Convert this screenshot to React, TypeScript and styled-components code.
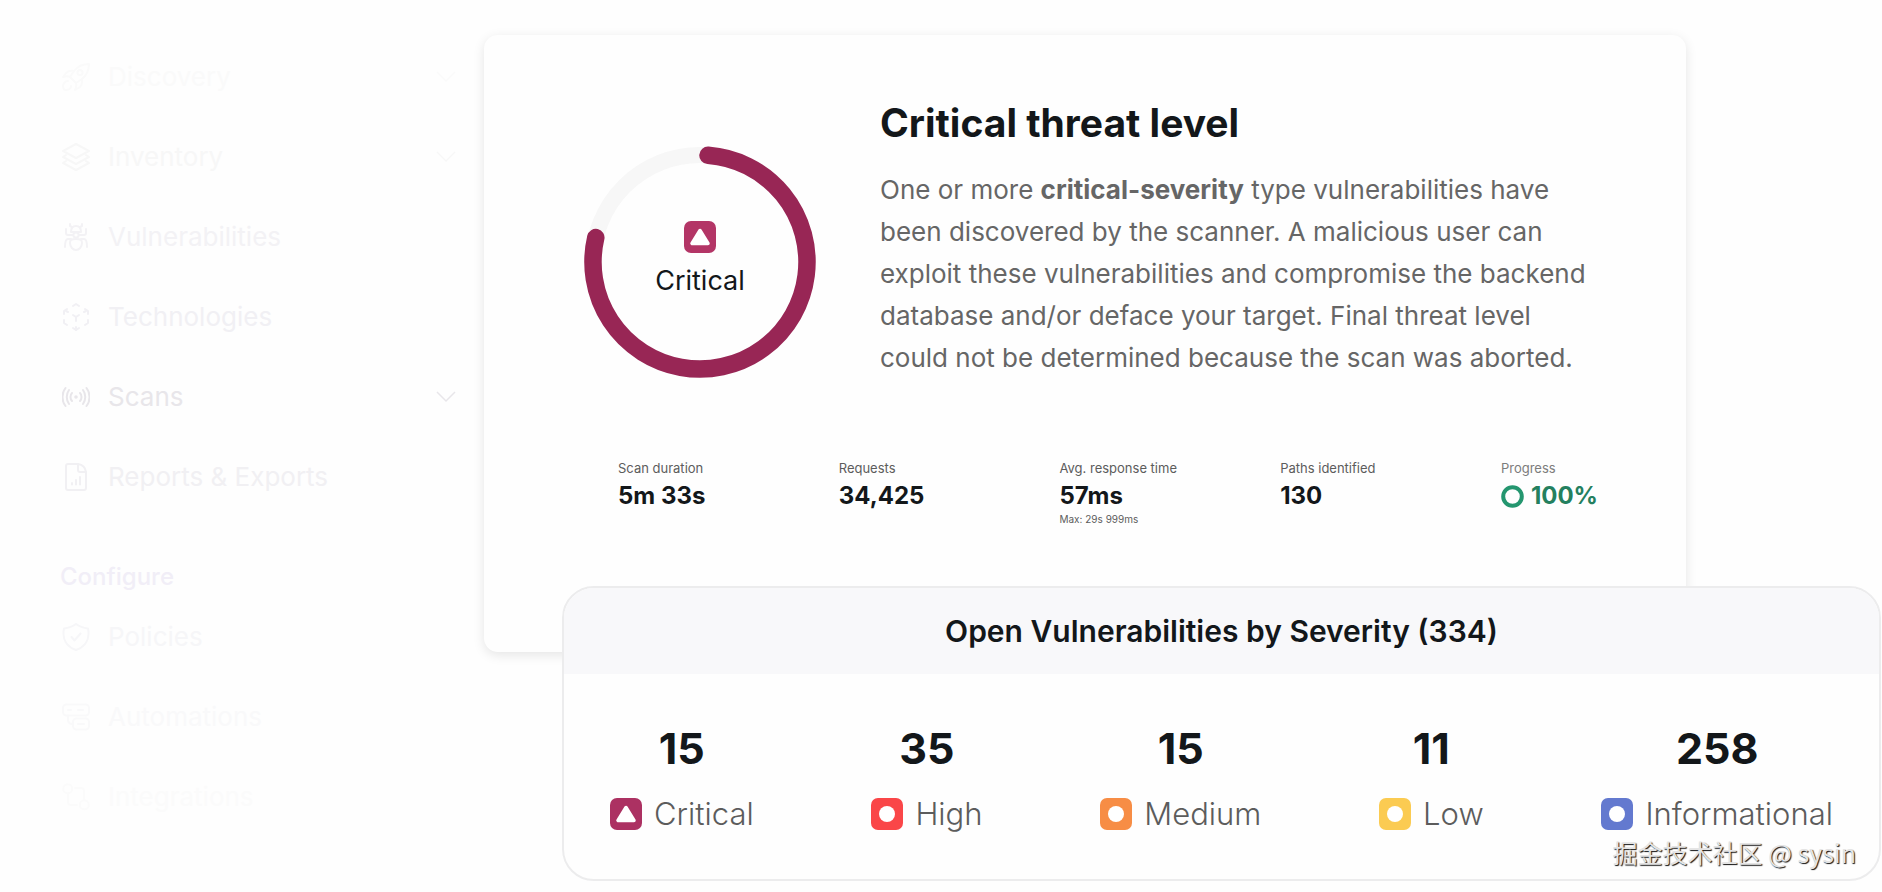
import React from "react";
import styled, { createGlobalStyle } from "styled-components";

const GlobalStyle = createGlobalStyle`
  *, *::before, *::after { box-sizing: border-box; }
  body {
    margin: 0;
    background: #fefefe;
    color: #13171a;
    font-family: Inter, "Liberation Sans", "Noto Sans CJK SC", sans-serif;
  }
  h1, h2, p, ul, dl, dd { margin: 0; padding: 0; }
  ul { list-style: none; }
`;

/* ---------- page ---------- */

const Page = styled.div`
  position: relative;
  display: flex;
  align-items: flex-start;
  min-height: 100vh;
`;

const Sidebar = styled.nav`
  flex: 0 0 484px;
  padding: 37px 28px 0 60px;
`;

const Main = styled.main`
  flex: 1;
  min-width: 0;
  padding: 35px 1px 11px 0;
`;

/* ---------- sidebar ---------- */

const NavLink = styled.a<{ $tone: string }>`
  display: flex;
  align-items: center;
  gap: 18px;
  height: 80px;
  padding-left: 2px;
  font-size: 26px;
  line-height: 32px;
  text-decoration: none;
  color: ${(p) => p.$tone};
`;

const NavLabel = styled.span`
  flex: 1;
`;

const NavHeading = styled.h2`
  padding: 40px 0 0;
  font-size: 24px;
  font-weight: 500;
  line-height: 40px;
  color: #f1eef7;
`;

const NavIcon = styled.svg`
  flex: none;
  width: 28px;
  height: 28px;
  fill: none;
  stroke: currentColor;
  stroke-width: 2;
  stroke-linecap: round;
  stroke-linejoin: round;
`;

const Chevron = styled.svg`
  flex: none;
  width: 20px;
  height: 12px;
  fill: none;
  stroke: currentColor;
  stroke-width: 1.5;
`;

const icons: Record<string, React.ReactNode> = {
  rocket: (
    <>
      <path d="M27 1c-6 0-11 2-15 7l-4 6 6 6 6-4c5-4 7-9 7-15z" />
      <circle cx="18" cy="9.500" r="2.500" />
      <path d="M12 8c-4-.5-6 0-8 2l-3 4c3-1 5-1 7 0M20 16c.5 4 0 6-2 8l-5 3c1-3 2-4 1-7" />
      <path d="M6 18c-3 0-5 3-5 5 0 3 1 4 3 4 3 0 5-2 5-4" />
    </>
  ),
  layers: (
    <>
      <path d="M14 1l13 7-13 7-13-7z" />
      <path d="M4 12l-3 2 13 7 13-7-3-2M4 18l-3 2 13 7 13-7-3-2" />
    </>
  ),
  bug: (
    <>
      <path d="M9 9c0-4 2-6 5-6s5 2 5 6z" />
      <path d="M10 4L8 3V1M18 4l2-1V1" />
      <circle cx="14" cy="12" r="2.600" />
      <path d="M14 16c5 0 6 1 6 4 0 4-3 7-6 7s-6-3-6-7c0-3 1-4 6-4z" />
      <path d="M11 12H6c-2 0-2-1-2-2V6M17 12h5c2 0 2-1 2-2V6M9 16H6c-2 0-3 3-3 8M19 16h3c2 0 3 3 3 8" />
    </>
  ),
  cube: (
    <>
      <path d="M11 3l3-2 3 2M11 25l3 2 3-2M2 11V8l3-2M26 11V8l-3-2M2 17v3l3 2M26 17v3l-3 2" />
      <path d="M11 12l3 2 3-2M14 14v4M14 24v3M4 8l2 1M24 8l-2 1" />
    </>
  ),
  broadcast: (
    <>
      <circle cx="14" cy="14" r=".8" />
      <path d="M10 10c-2 2-2 6 0 8M18 10c2 2 2 6 0 8M7 7c-3 4-3 10 0 14M21 7c3 4 3 10 0 14M3.500 5c-4 5-4 13 0 18M24.500 5c4 5 4 13 0 18" />
    </>
  ),
  report: (
    <>
      <path d="M16 1H6Q4 1 4 3v22q0 2 2 2h16q2 0 2-2V9q-1-7-8-8z" />
      <path d="M16 1v6q0 2 2 2h6M10 20v1.500M14 17v4.500M18 14v7.500" />
    </>
  ),
  shield: (
    <>
      <path d="M14 1c4 3 8 4 12 4.500 2 10-2 18-12 21.500C4 23.500 0 15.500 2 5.500 6 5 10 4 14 1z" />
      <path d="M9.500 14l3 3.500 6-7" />
    </>
  ),
  automation: (
    <>
      <rect x="1" y="1.500" width="26" height="11" rx="3.500" />
      <rect x="11" y="15.500" width="16" height="11" rx="3.500" />
      <path d="M6 12.500V17q0 4 5 4M6 7h3M16 7h5M16 21h6" />
    </>
  ),
  integration: (
    <>
      <circle cx="5.700" cy="5.700" r="4.500" />
      <circle cx="22.300" cy="21.800" r="4.500" />
      <path d="M6 11v8q0 3 3 3h6M13 5h6q3 0 3 3v9" />
    </>
  ),
};

type NavEntry = { label: string; icon: string; tone: string; expandable?: boolean };

const mainNav: NavEntry[] = [
  { label: "Discovery", icon: "rocket", tone: "#fafafa", expandable: true },
  { label: "Inventory", icon: "layers", tone: "#f7f7f7", expandable: true },
  { label: "Vulnerabilities", icon: "bug", tone: "#f3f2f5" },
  { label: "Technologies", icon: "cube", tone: "#f1f0f4" },
  { label: "Scans", icon: "broadcast", tone: "#e8e6ea", expandable: true },
  { label: "Reports & Exports", icon: "report", tone: "#f1f0f3" },
];

const configureNav: NavEntry[] = [
  { label: "Policies", icon: "shield", tone: "#f6f6f8" },
  { label: "Automations", icon: "automation", tone: "#f9f9fa" },
  { label: "Integrations", icon: "integration", tone: "#fbfbfb" },
];

const NavList = ({ entries }: { entries: NavEntry[] }) => (
  <ul>
    {entries.map((entry) => (
      <li key={entry.label}>
        <NavLink href="#" $tone={entry.tone}>
          <NavIcon viewBox="0 0 28 28" aria-hidden="true">
            {icons[entry.icon]}
          </NavIcon>
          <NavLabel>{entry.label}</NavLabel>
          {entry.expandable && (
            <Chevron viewBox="0 0 20 12" aria-hidden="true">
              <path d="M1 1l9 9 9-9" />
            </Chevron>
          )}
        </NavLink>
      </li>
    ))}
  </ul>
);

/* ---------- threat card ---------- */

const ThreatCard = styled.section`
  margin-right: 195px;
  padding: 63px 88px 127px 100px;
  border-radius: 14px;
  background: #fefefe;
  box-shadow: 0 3px 12px rgba(0, 0, 0, 0.1);
`;

const ThreatSummary = styled.div`
  display: flex;
  align-items: flex-start;
  gap: 64px;
`;

const Gauge = styled.div`
  display: grid;
  flex: none;
  width: 232px;
  height: 232px;
  margin-top: 48px;

  > * {
    grid-area: 1 / 1;
  }
`;

const GaugeRing = styled.svg`
  width: 232px;
  height: 232px;
  fill: none;
`;

const GaugeLabel = styled.div`
  display: flex;
  flex-direction: column;
  align-items: center;
  gap: 10px;
  padding-top: 75px;
  font-size: 27px;
  line-height: 36px;
`;

const ThreatText = styled.div`
  flex: 1;
`;

const ThreatTitle = styled.h1`
  margin-bottom: 21px;
  font-size: 39px;
  font-weight: 700;
  line-height: 50px;
`;

const ThreatCopy = styled.p`
  font-size: 26px;
  line-height: 42px;
  color: #666;
`;

const Stats = styled.dl`
  display: grid;
  grid-template-columns: repeat(4, 1fr) auto;
  margin: 79px 0 0 34px;
`;

const StatLabel = styled.dt<{ $soft?: boolean }>`
  font-size: 13px;
  line-height: 21px;
  color: ${(p) => (p.$soft ? "#7c7c7c" : "#5c5c5c")};
`;

const StatValue = styled.dd<{ $positive?: boolean }>`
  display: flex;
  align-items: center;
  gap: 7px;
  font-size: 24px;
  font-weight: 700;
  line-height: 34px;
  color: ${(p) => (p.$positive ? "#24805f" : "inherit")};
`;

const StatNote = styled.dd`
  font-size: 10px;
  line-height: 12px;
  color: #5c5c5c;
`;

const ProgressRing = styled.svg`
  width: 23px;
  height: 23px;
  fill: none;
  stroke: #24966f;
  stroke-width: 4;
`;

/* ---------- severity panel ---------- */

const SeverityPanel = styled.section`
  position: relative;
  margin: -66px 0 0 78px;
  overflow: hidden;
  border: 2px solid #ececed;
  border-radius: 32px;
  background: #fefefe;
`;

const PanelTitle = styled.h2`
  font-size: 30px;
  font-weight: 600;
  line-height: 86px;
  text-align: center;
  background: #f8f8fa;
`;

const SeverityList = styled.ul`
  display: flex;
  justify-content: space-between;
  padding: 48px 46px 49px;
`;

const SeverityItem = styled.li`
  display: flex;
  flex-direction: column;
  align-items: center;
  gap: 24px;
`;

const SeverityCount = styled.strong`
  font-size: 43px;
  font-weight: 700;
  line-height: 52px;
`;

const SeverityName = styled.span`
  display: flex;
  align-items: center;
  gap: 12px;
  font-size: 31px;
  font-weight: 300;
  line-height: 32px;
  color: #5c5c5c;
`;

const BadgeIcon = styled.svg`
  flex: none;
  width: 32px;
  height: 32px;
`;

const SeverityBadge = ({ color, shape }: { color: string; shape: "triangle" | "circle" }) => (
  <BadgeIcon viewBox="0 0 32 32" aria-hidden="true">
    <rect width="32" height="32" rx="7" fill={color} />
    {shape === "circle" ? (
      <circle cx="16" cy="16" r="8" fill="#fff" />
    ) : (
      <path
        d="M16 9.500L8 22.500h16z"
        fill="#fff"
        stroke="#fff"
        strokeWidth="3.500"
        strokeLinejoin="round"
      />
    )}
  </BadgeIcon>
);

const severities = [
  { count: 15, name: "Critical", color: "#ac3162", shape: "triangle" as const },
  { count: 35, name: "High", color: "#fa4648", shape: "circle" as const },
  { count: 15, name: "Medium", color: "#f78d45", shape: "circle" as const },
  { count: 11, name: "Low", color: "#fbcb52", shape: "circle" as const },
  { count: 258, name: "Informational", color: "#6379cf", shape: "circle" as const },
];

/* Signature laid over the lower right corner of the page. */
const Watermark = styled.div`
  position: absolute;
  right: 26px;
  bottom: 22px;
  font-family: "Noto Sans CJK SC", sans-serif;
  font-size: 25px;
  line-height: 36px;
  color: #e4e4e4;
  text-shadow: 1px 1px 1px #111;
`;

export default function App() {
  return (
    <>
      <GlobalStyle />
      <Page>
        <Sidebar>
          <NavList entries={mainNav} />
          <NavHeading>Configure</NavHeading>
          <NavList entries={configureNav} />
        </Sidebar>
        <Main>
          <ThreatCard>
            <ThreatSummary>
              <Gauge>
                <GaugeRing viewBox="-116 -116 232 232" aria-hidden="true">
                  <circle r="107" stroke="#f7f7f7" strokeWidth="16" />
                  <path
                    d="M8-106.700A107 107 0 1 1-104.200-24.400"
                    stroke="#982655"
                    strokeWidth="17.500"
                    strokeLinecap="round"
                  />
                </GaugeRing>
                <GaugeLabel>
                  <SeverityBadge color="#b33566" shape="triangle" />
                  Critical
                </GaugeLabel>
              </Gauge>
              <ThreatText>
                <ThreatTitle>Critical threat level</ThreatTitle>
                <ThreatCopy>
                  One or more <strong>critical-severity</strong> type vulnerabilities have been
                  discovered by the scanner. A malicious user can exploit these vulnerabilities and
                  compromise the backend database and/or deface your target. Final threat level
                  could not be determined because the scan was aborted.
                </ThreatCopy>
              </ThreatText>
            </ThreatSummary>
            <Stats>
              <div>
                <StatLabel>Scan duration</StatLabel>
                <StatValue>5m 33s</StatValue>
              </div>
              <div>
                <StatLabel>Requests</StatLabel>
                <StatValue>34,425</StatValue>
              </div>
              <div>
                <StatLabel>Avg. response time</StatLabel>
                <StatValue>57ms</StatValue>
                <StatNote>Max: 29s 999ms</StatNote>
              </div>
              <div>
                <StatLabel>Paths identified</StatLabel>
                <StatValue>130</StatValue>
              </div>
              <div>
                <StatLabel $soft>Progress</StatLabel>
                <StatValue $positive>
                  <ProgressRing viewBox="0 0 23 23" aria-hidden="true">
                    <circle cx="11.500" cy="11.500" r="9.300" />
                  </ProgressRing>
                  100%
                </StatValue>
              </div>
            </Stats>
          </ThreatCard>
          <SeverityPanel>
            <PanelTitle>Open Vulnerabilities by Severity (334)</PanelTitle>
            <SeverityList>
              {severities.map((s) => (
                <SeverityItem key={s.name}>
                  <SeverityCount>{s.count}</SeverityCount>
                  <SeverityName>
                    <SeverityBadge color={s.color} shape={s.shape} />
                    {s.name}
                  </SeverityName>
                </SeverityItem>
              ))}
            </SeverityList>
          </SeverityPanel>
        </Main>
        <Watermark>掘金技术社区 @ sysin</Watermark>
      </Page>
    </>
  );
}
